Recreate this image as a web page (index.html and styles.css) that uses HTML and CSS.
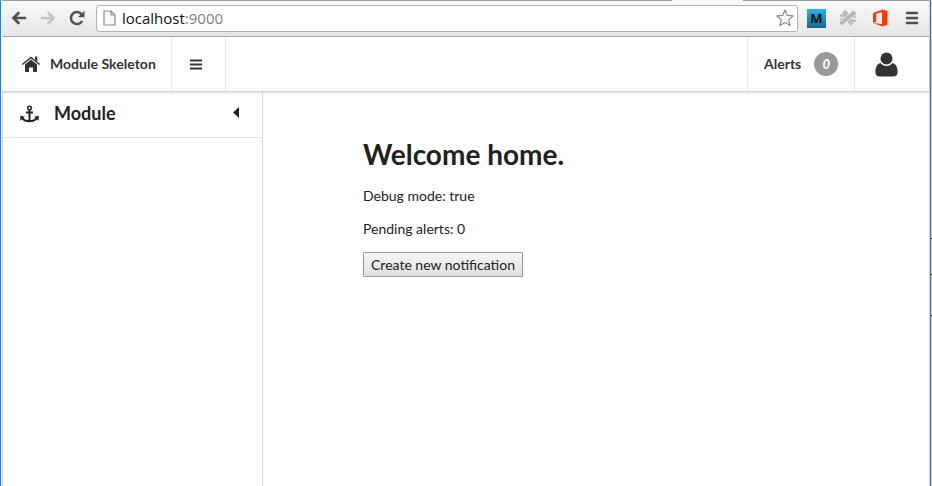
FILE: index.html
```html
<!DOCTYPE html>
<html lang="en">
<head>
<meta charset="utf-8">
<title>Module Skeleton</title>
<link rel="stylesheet" href="styles.css">
</head>
<body>
<div class="window">
  <div class="browser">
    <svg class="nav-icon" width="16" height="14" viewBox="0 0 16 14"><path d="M14 7H3M7.5 2 2.5 7l5 5" fill="none" stroke="#505050" stroke-width="2.7" stroke-linecap="round"/></svg>
    <svg class="nav-icon forward" width="16" height="14" viewBox="0 0 16 14"><path d="M2 7h11M8.500 2l5 5-5 5" fill="none" stroke="#c6c6c6" stroke-width="2.700" stroke-linecap="round"/></svg>
    <svg class="nav-icon reload" width="17" height="16" viewBox="0 0 17 16"><path d="M13.200 11A6 6 0 1 1 12.600 4.200" fill="none" stroke="#505050" stroke-width="2.500"/><path d="M15.500.8V7.300H9z" fill="#505050"/></svg>
    <div class="address">
      <svg width="13" height="16" viewBox="0 0 13 16"><path d="M1 1h7l4 4v10H1zM8 1v4h4" fill="#f8f8f8" stroke="#8b8b8b" stroke-width="1.200"/></svg>
      <span class="url">localhost<span class="port">:9000</span></span>
      <svg class="star" width="18" height="18" viewBox="0 0 18 18"><path d="m9 1 2.300 5.400 5.900.5-4.500 3.900 1.400 5.700L9 13.500l-5.100 3 1.400-5.700L.8 6.900l5.900-.5z" fill="#fff" stroke="#8a8a8a" stroke-width="1.200" stroke-linejoin="round"/></svg>
    </div>
    <span class="ext-m">M</span>
    <svg class="ext-x" width="18" height="18" viewBox="0 0 18 18"><path d="m5 2 8 13.500" stroke="#bdbdbd" stroke-width="4.500"/><path d="m1 6.500 6 .5M1 10.500l6-.5M11 8l6-.5M11 11l6 1" stroke="#bdbdbd" stroke-width="2.500"/><path d="M1.500 15 16 3" stroke="#ececec" stroke-width="5.500"/><path d="M1.500 15 16 3" stroke="#b5b5b5" stroke-width="4"/></svg>
    <svg class="ext-office" width="15" height="18" viewBox="0 0 15 18"><path fill="#f43d05" fill-rule="evenodd" d="M0 4 9.500.5l5 1.400v14.200l-5 1.400L0 14l9 1V3.300L3.200 4.700v8L0 14z"/></svg>
    <svg class="chrome-menu" width="14" height="14" viewBox="0 0 14 14"><path d="M2 2h10M2 7h10M2 12h10" stroke="#505050" stroke-width="2.700" stroke-linecap="round"/></svg>
    <i class="tab-gap"></i>
  </div>
  <header class="menu">
    <a class="brand">
      <svg width="20" height="18" viewBox="0 0 20 18"><path d="m10 4.500 6 5v6.700q0 .8-.8.800H12v-4.500H8V17H4.800q-.8 0-.8-.8V9.500z"/><path d="m1.300 9.500 8.700-7 8.700 7" fill="none" stroke="#333" stroke-width="1.500"/><path d="M14 1.500h2.300v5L14 4.600z"/></svg>
      <span>Module Skeleton</span>
    </a>
    <a class="toggle"><svg width="12" height="11" viewBox="0 0 12 11"><path d="M.5 1.500h11M.5 5.500h11M.5 9.500h11" stroke="#333" stroke-width="1.900" stroke-linecap="round"/></svg></a>
    <a class="alerts"><span>Alerts</span><span class="count">0</span></a>
    <a class="user"><svg width="23" height="25" viewBox="0 0 23 25"><circle cx="11.500" cy="6.500" r="6"/><path d="M5.500 11C1.500 12 .4 16 .4 20c0 3 1.600 4.500 4.300 4.500h13.600c2.700 0 4.300-1.500 4.300-4.500 0-4-1.100-8-5.100-9-1.500 2-3.500 3-6 3s-4.500-1-6-3z"/></svg></a>
  </header>
  <div class="body">
    <aside class="sidebar">
      <div class="module">
        <svg width="19" height="18" viewBox="0 0 19 18"><circle cx="9.500" cy="3" r="1.800" fill="none" stroke="#222" stroke-width="1.500"/><path d="M9.500 5v11M6 7.500h7M2 12.500c1.500 2.700 4 3.800 7.500 3.800s6-1.100 7.500-3.800" fill="none" stroke="#222" stroke-width="2"/><path d="M.3 10.700v5l4.500-3.900zM18.700 10.700v5l-4.500-3.900z"/></svg>
        <span>Module</span>
        <svg class="caret" width="6" height="11" viewBox="0 0 6 11"><path d="M6 0v11L0 5.500z"/></svg>
      </div>
    </aside>
    <main class="content">
      <h1>Welcome home.</h1>
      <p>Debug mode: true</p>
      <p>Pending alerts: 0</p>
      <button>Create new notification</button>
    </main>
  </div>
</div>
<div class="edge"><i></i><i></i><i></i></div>
</body>
</html>
```
FILE: styles.css
```css
* { box-sizing: border-box; }
body { margin: 0; width: 932px; height: 486px; overflow: hidden; display: flex; background: #fff; color: #222; font: 14px/18px Lato, sans-serif; }
svg { display: block; flex: none; fill: #333; }
.window { width: 930px; height: 486px; border-left: 1px solid #1883d7; border-right: 1px solid #d0d0c8; display: flex; flex-direction: column; }
.browser { position: relative; height: 37px; flex: none; display: flex; align-items: center; padding: 0 0 1px 10px; margin-left: 1px; background: linear-gradient(#fafafa, #e5e5e5); border-top: 1px solid #9a9ba3; border-bottom: 1px solid #a9a9a9; }
.tab-gap { position: absolute; top: -1px; left: 670px; width: 71px; height: 1px; background: #fafafa; }
.nav-icon { margin-left: -1px; }
.forward { margin-left: 13px; }
.reload { margin-left: 13px; }
.address { display: flex; align-items: center; width: 702px; height: 27px; margin-left: 10px; padding: 0 3px 0 6px; border: 1px solid #b0b0b0; border-radius: 3px; background: #fff; }
.url { margin-left: 6px; font: 15px/20px "Open Sans", sans-serif; color: #111; letter-spacing: 0; }
.port { color: #808080; }
.star { margin-left: auto; }
.ext-m { width: 19px; height: 19px; margin-left: 9px; background: linear-gradient(#2cb0ea, #166a8e); color: #111; font: bold 13px/18px "Open Sans", sans-serif; text-align: center; }
.ext-x { margin-left: 13px; }
.ext-office { margin-left: 16px; }
.chrome-menu { margin-left: 17px; }
.menu { position: relative; display: flex; flex: none; height: 55px; margin-left: 1px; background: #fff; border-bottom: 1px solid #d4d4d5; box-shadow: 0 1px 2px rgba(34,36,38,.15); font-weight: 700; color: #333; }
.menu a { display: flex; align-items: center; border-right: 1px solid #e8e8e8; }
.menu .brand { width: 170px; padding-left: 19px; gap: 9px; letter-spacing: .03px; }
.menu .toggle { width: 54px; padding-left: 18px; }
.menu .alerts { width: 108px; margin-left: auto; padding-left: 16px; border-left: 1px solid #e8e8e8; }
.count { width: 24px; height: 24px; margin-left: 13px; border-radius: 50%; background: #999; color: #fff; font: italic 900 13px/24px Lato, sans-serif; text-align: center; }
.menu .user { width: 74px; padding-left: 20px; border: 0; }
.body { display: flex; flex: 1; margin-left: 1px; border-left: 1px solid #d8d8d8; }
.sidebar { width: 260px; border-right: 1px solid #d8d8d9; }
.module { display: flex; align-items: center; height: 46px; padding: 0 23px 2px 17px; border-bottom: 1px solid #e8e8e8; font-size: 18px; font-weight: 700; }
.module svg { fill: #222; }
.module span { margin: -2px 0 0 15px; }
.module .caret { margin: 0 0 3px auto; }
.content { padding: 44px 0 0 100px; }
h1 { margin: 0 0 15px; font-size: 28px; line-height: 36px; font-weight: 700; }
p { margin: 0 0 15px; }
button { display: block; width: 160px; height: 25px; margin: -1px 0 0; padding: 0; border: 1px solid #999; border-radius: 1px; background: linear-gradient(#f6f6f6, #dedede); font: 14px/20px Lato, sans-serif; color: #222; }
.edge { width: 2px; height: 486px; display: grid; grid-template-rows: 239px 36px 41px 1fr; border-left: 1px solid #1883d7; background: #c5d5df; }
.edge i { border-bottom: 1px solid #102030; }
```
